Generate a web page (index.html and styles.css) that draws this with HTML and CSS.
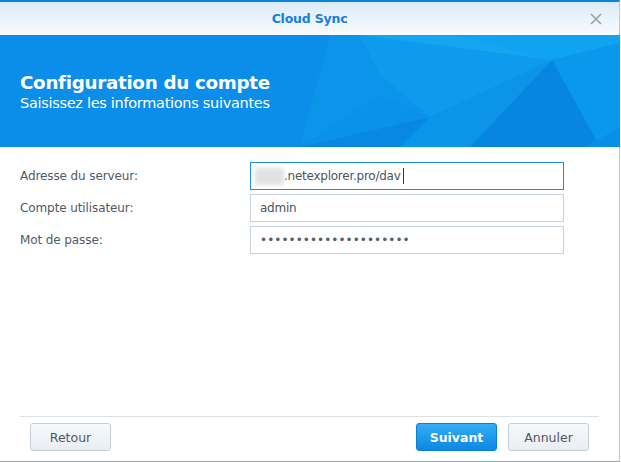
FILE: index.html
```html
<!DOCTYPE html>
<html>
<head>
<meta charset="utf-8">
<link rel="stylesheet" href="styles.css">
</head>
<body>
<div class="window">
  <div class="titlebar">
    <span class="title">Cloud Sync</span>
    <svg class="close" width="12" height="12" viewBox="0 0 12 12"><path d="M1 1L11 11M11 1L1 11" stroke="#9aa0a6" stroke-width="1.6" fill="none"/></svg>
  </div>
  <div class="banner">
    <svg class="facets" width="620" height="112" viewBox="0 0 620 112" preserveAspectRatio="none">
      <rect width="620" height="112" fill="#0a8ee9"/>
      <polygon points="330,0 620,0 620,112 300,112" fill="#0c93ea"/>
      <polygon points="360,0 552,25 430,82 380,40" fill="#0e9bed"/>
      <polygon points="360,0 550,0 552,25" fill="#16a5f0"/>
      <polygon points="455,0 620,0 620,8 552,25" fill="#10a3f3"/>
      <polygon points="300,112 380,60 430,82" fill="#0a92e8"/>
      <polygon points="430,82 552,25 470,112 400,112" fill="#0b95e9"/>
      <polygon points="552,25 620,8 620,112 600,112" fill="#0a98ec"/>
      <polygon points="552,25 600,112 470,112" fill="#0786e0"/>
      <polygon points="300,112 430,82 400,112" fill="#0888e3"/>
      <polygon points="585,112 620,92 620,112" fill="#0a8fe8"/>
    </svg>
    <div class="banner-text">
      <div class="heading">Configuration du compte</div>
      <div class="sub">Saisissez les informations suivantes</div>
    </div>
  </div>
  <div class="form">
    <div class="row">
      <label class="label">Adresse du serveur:</label>
      <div class="field focus"><span class="blur"></span><span class="val">.netexplorer.pro/dav</span><span class="caret"></span></div>
    </div>
    <div class="row">
      <label class="label">Compte utilisateur:</label>
      <div class="field"><span class="val">admin</span></div>
    </div>
    <div class="row">
      <label class="label">Mot de passe:</label>
      <div class="field"><span class="dots">•••••••••••••••••••••</span></div>
    </div>
  </div>
  <div class="footer">
    <button class="btn">Retour</button>
    <div class="spacer"></div>
    <button class="btn primary">Suivant</button>
    <button class="btn">Annuler</button>
  </div>
</div>
</body>
</html>
```
FILE: styles.css
```css
* { box-sizing: border-box; }
html, body { margin: 0; padding: 0; background: #ffffff; }
body { width: 621px; height: 462px; overflow: hidden; font-family: "DejaVu Sans", sans-serif; }
.window {
  width: 620px;
  height: 462px;
  border-top: 2px solid #0a86e0;
  border-right: 1px solid #c4c8cc;
  border-bottom: 1px solid #9aa0a6;
  display: flex;
  flex-direction: column;
  background: #fff;
}
.titlebar {
  height: 33px;
  background: linear-gradient(#dcebf9, #f9fcff);
  display: flex;
  align-items: center;
  justify-content: center;
  position: relative;
}
.title {
  font-family: "DejaVu Sans", sans-serif;
  font-weight: bold;
  font-size: 12.5px;
  color: #1580d9;
  letter-spacing: -0.2px;
}
.close { position: absolute; right: 17px; top: 11px; }
.banner {
  height: 112px;
  position: relative;
  display: flex;
  flex-direction: column;
  justify-content: center;
  padding-left: 20px;
  padding-top: 2px;
}
.facets { position: absolute; left: 0; top: 0; }
.banner-text { position: relative; color: #fff; }
.heading {
  font-family: "DejaVu Sans", sans-serif;
  font-weight: bold;
  font-size: 18.3px;
  letter-spacing: -0.3px;
  line-height: 22px;
}
.sub {
  font-family: "DejaVu Sans", sans-serif;
  font-size: 14.5px;
  line-height: 18px;
  letter-spacing: -0.3px;
}
.form {
  flex: 1;
  padding: 15px 0 0 20px;
  display: flex;
  flex-direction: column;
  gap: 4px;
}
.row { display: flex; align-items: center; height: 28px; }
.label {
  width: 230px;
  font-family: "DejaVu Sans", sans-serif;
  font-size: 12px;
  color: #4f5a66;
  letter-spacing: -0.1px;
}
.field {
  width: 314px;
  height: 28px;
  border: 1px solid #c8d2dc;
  display: flex;
  align-items: center;
  padding-left: 9px;
  font-family: "DejaVu Sans", sans-serif;
  font-size: 12px;
  color: #4a5560;
}
.field.focus { border-color: #1a8de6; padding-left: 4px; }
.blur {
  width: 29px;
  height: 17px;
  background: #e2e2e4;
  filter: blur(2px);
}
.val { letter-spacing: -0.25px; }
.caret { width: 1px; height: 16px; background: #333; margin-left: 2px; }
.dots { font-size: 12px; letter-spacing: 0.05px; color: #555d66; }
.footer {
  height: 45px;
  margin: 0 20px 0 20px;
  border-top: 1px solid #dde1e5;
  display: flex;
  align-items: center;
  padding: 0 10px 4px 10px;
  gap: 11px;
}
.spacer { flex: 1; }
.btn {
  width: 81px;
  height: 28px;
  border: 1px solid #c5ced8;
  border-radius: 3px;
  background: linear-gradient(#f7f9fb, #e9eef3);
  font-family: "DejaVu Sans", sans-serif;
  font-size: 12.5px;
  color: #4f5964;
  padding: 0;
}
.btn.primary {
  background: linear-gradient(#35acf7, #0b88e3);
  border-color: #0b7fd6;
  color: #fff;
  font-weight: bold;
}
```
